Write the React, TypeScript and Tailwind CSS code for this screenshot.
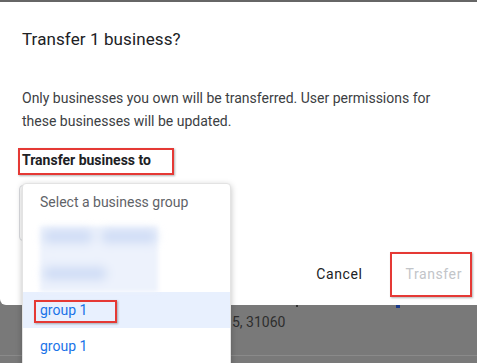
export default function App() {
  return (
    <div className="relative w-[477px] h-[363px] overflow-hidden bg-[#797979] font-['Roboto','Noto_Sans',sans-serif]">
      <div className="h-[2px] bg-[#666]" />

      {/* dialog */}
      <div className="h-[303px] bg-white rounded-bl-[6px] pl-[22px] pr-[7px] pt-[25px] flex flex-col">
        <h1 className="text-[17px] leading-[24px] tracking-[0.1px] text-[#202124]">Transfer 1 business?</h1>
        <p className="mt-[36px] text-[14px] leading-[23px] text-[#3c4043]">
          Only businesses you own will be transferred. User permissions for
          <br />
          these businesses will be updated.
        </p>
        <div className="mt-[17px] text-[14px] leading-[20px] font-bold text-[#202124]">
          Transfer business to
        </div>
        <div className="mt-[15px] -ml-[3px] h-[56px] w-[212px] rounded-[4px] border border-[#dadce0]" />
        <div className="mt-[15px] flex justify-end items-center gap-[27px] h-[36px]">
          <button className="px-[8px] h-[36px] text-[14px] font-normal tracking-[0.6px] text-[#202124]">
            Cancel
          </button>
          <button className="px-[8px] h-[36px] text-[14px] font-normal tracking-[0.6px] text-[#c2c5c9]">
            Transfer
          </button>
        </div>
      </div>

      {/* page behind */}
      <div className="h-[58px] flex flex-col">
        <div className="h-[3px] flex gap-[98px] pl-[296px]">
          <div className="w-[2px] h-[2px] bg-[#333]" />
          <div className="w-[4px] h-[3px] bg-[#1a3a8a]" />
        </div>
        <div className="pl-[232px] pt-[4px] text-[14px] leading-[20px] text-[#2e2e2e]">5, 31060</div>
        <div className="mt-[23px] h-px bg-[#8a8a8a]" />
      </div>

      {/* dropdown menu */}
      <div className="absolute left-[22px] top-[183px] w-[209px] h-[190px] bg-white rounded-[4px] border border-[#e3e3e3] shadow-[0_2px_6px_rgba(0,0,0,0.25)] flex flex-col">
        <div className="h-[36px] flex items-center pl-[17px] text-[14px] text-[#5f6368]">Select a business group</div>
        <div className="h-[72px] pl-[17px] pt-[6px]">
          <div className="w-[118px] h-[66px] bg-[#edf2fc] blur-[2px] flex flex-col gap-[24px] pt-[4px] pl-[3px]">
            <div className="flex gap-[8px]">
              <div className="w-[50px] h-[13px] rounded-full bg-[#cfdcf5] blur-[4px]" />
              <div className="w-[56px] h-[13px] rounded-full bg-[#cfdcf5] blur-[4px]" />
            </div>
            <div className="w-[64px] h-[13px] rounded-full bg-[#cfdcf5] blur-[4px]" />
          </div>
        </div>
        <div className="h-[36px] flex items-center pl-[17px] bg-[#e8f0fe] text-[14px] text-[#1a73e8]">group 1</div>
        <div className="h-[36px] flex items-center pl-[17px] text-[14px] text-[#1a73e8]">group 1</div>
      </div>

      {/* annotation boxes */}
      <div className="absolute left-[18px] top-[148px] w-[156px] h-[27px] border-2 border-[#e53935] shadow-[1px_1px_2px_rgba(0,0,0,0.3)]" />
      <div className="absolute left-[34px] top-[300px] w-[83px] h-[23px] border-2 border-[#e53935] shadow-[1px_1px_2px_rgba(0,0,0,0.3)]" />
      <div className="absolute left-[390px] top-[252px] w-[82px] h-[45px] border-2 border-[#e53935] shadow-[1px_1px_2px_rgba(0,0,0,0.3)]" />
    </div>
  )
}
